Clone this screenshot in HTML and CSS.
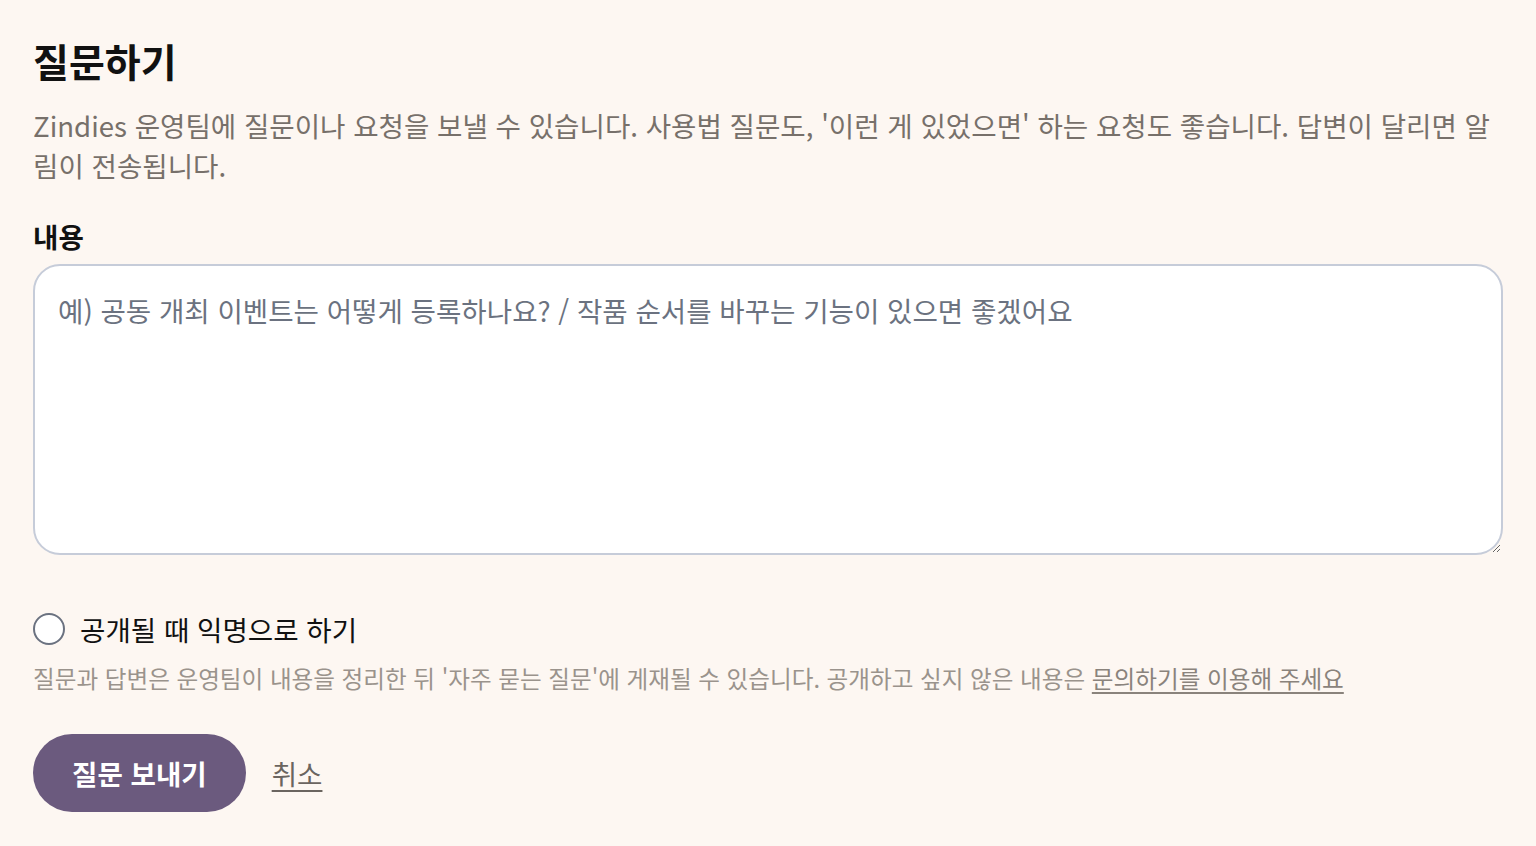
FILE: index.html
```html
<!DOCTYPE html>
<html lang="ko">
<head>
<meta charset="utf-8">
<title>질문하기</title>
<link rel="stylesheet" href="styles.css">
</head>
<body>
<main class="page">
  <h1 class="title">질문하기</h1>
  <p class="desc">Zindies 운영팀에 질문이나 요청을 보낼 수 있습니다. 사용법 질문도, '이런 게 있었으면' 하는 요청도 좋습니다. 답변이 달리면 알림이 전송됩니다.</p>
  <form class="form">
    <label class="field-label" for="content">내용</label>
    <textarea id="content" class="textarea" placeholder="예) 공동 개최 이벤트는 어떻게 등록하나요? / 작품 순서를 바꾸는 기능이 있으면 좋겠어요"></textarea>
    <label class="check">
      <input type="checkbox" class="check-input">
      <span class="check-box"></span>
      <span class="check-text">공개될 때 익명으로 하기</span>
    </label>
    <p class="note">질문과 답변은 운영팀이 내용을 정리한 뒤 '자주 묻는 질문'에 게재될 수 있습니다. 공개하고 싶지 않은 내용은 <a href="#" class="note-link">문의하기를 이용해 주세요</a></p>
    <div class="actions">
      <button type="button" class="btn-primary">질문 보내기</button>
      <a href="#" class="cancel">취소</a>
    </div>
  </form>
</main>
</body>
</html>
```

FILE: styles.css
```css
html, body {
  margin: 0;
  padding: 0;
  background: #fdf7f2;
}
body {
  font-family: "Noto Sans CJK KR", "Noto Sans", sans-serif;
  color: #111;
}
.page {
  padding: 30px 33px 0 33px;
}
.title {
  margin: 0;
  font-size: 39px;
  font-weight: 700;
  line-height: 60px;
  color: #111;
}
.desc {
  margin: 15px 0 0 0;
  font-size: 27.6px;
  line-height: 40px;
  color: #77706a;
}
.form {
  display: flex;
  flex-direction: column;
  margin-top: 31px;
}
.field-label {
  font-size: 27.6px;
  font-weight: 700;
  line-height: 40px;
  color: #111;
}
.textarea {
  margin-top: 8px;
  box-sizing: border-box;
  width: 100%;
  height: 291px;
  border: 2px solid #c6ccd9;
  border-radius: 27px;
  background: #fff;
  padding: 24px 23px;
  font-family: inherit;
  font-size: 27.6px;
  line-height: 40px;
  color: #111;
  resize: vertical;
  outline: none;
}
.textarea::placeholder {
  color: #6b7280;
}
.check {
  display: flex;
  align-items: center;
  gap: 15px;
  margin-top: 54px;
  cursor: pointer;
}
.check-input {
  position: absolute;
  opacity: 0;
  width: 0;
  height: 0;
}
.check-box {
  box-sizing: border-box;
  width: 32px;
  height: 32px;
  border: 2px solid #6b7280;
  border-radius: 50%;
  background: #fff;
  flex: none;
}
.check-text {
  font-size: 27.6px;
  line-height: 40px;
  color: #111;
}
.note {
  margin: 11px 0 0 0;
  font-size: 23.6px;
  line-height: 36px;
  color: #9a938c;
}
.note-link {
  color: #8a837c;
  text-decoration: underline;
  text-underline-offset: 4px;
}
.actions {
  display: flex;
  align-items: center;
  gap: 26px;
  margin-top: 38px;
}
.btn-primary {
  height: 78px;
  padding: 0 39px;
  border: none;
  border-radius: 39px;
  background: #6b5a7e;
  color: #fff;
  font-family: inherit;
  font-size: 27.6px;
  font-weight: 700;
  cursor: pointer;
}
.cancel {
  font-size: 27.6px;
  color: #6b6560;
  text-decoration: underline;
  text-underline-offset: 5px;
}
```
